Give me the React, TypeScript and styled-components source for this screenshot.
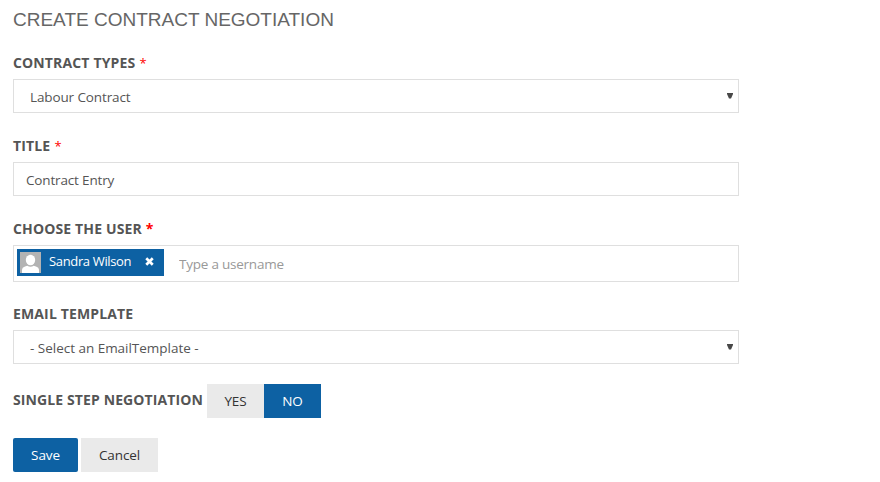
import React, { useState } from "react";
import styled, { createGlobalStyle } from "styled-components";

const Global = createGlobalStyle`
  *, *::before, *::after { box-sizing: border-box; }
  body { margin: 0; background: #fff; color: #555; font-family: "Open Sans", "Noto Sans", sans-serif; font-size: 13.5px; }
`;

const Form = styled.form`
  width: 739px;
  padding: 9px 0 10px 13px;
`;

const Heading = styled.h1`
  margin: 0 0 19px;
  height: 22px;
  font: 400 19px/22px "Liberation Sans", Arial, sans-serif;
  color: #666;
  white-space: nowrap;
`;

const Field = styled.div`
  margin-bottom: 20px;
`;

const Label = styled.label<{ $compact?: boolean }>`
  display: block;
  height: ${(p) => (p.$compact ? 28 : 29)}px;
  font-size: 14px;
  line-height: ${(p) => (p.$compact ? 24 : 26)}px;
  font-weight: 700;
  letter-spacing: 0.14px;
  white-space: nowrap;
`;

const Required = styled.span<{ $bold?: boolean }>`
  margin-left: ${(p) => (p.$bold ? 0 : 0.5)}px;
  color: #f00;
  font-size: ${(p) => (p.$bold ? 14 : 13)}px;
  font-weight: ${(p) => (p.$bold ? 700 : 400)};
`;

const SelectWrap = styled.div`
  display: flex;
  align-items: center;
  height: 34px;
  padding-right: 5px;
  border: 1px solid #dfdfdf;
`;

const Select = styled.select<{ $spacing: number }>`
  flex: 1;
  height: 32px;
  padding: 1px 0 0 16px;
  border: 0;
  outline: 0;
  appearance: none;
  background: transparent;
  color: #555;
  font: inherit;
  letter-spacing: ${(p) => p.$spacing}px;
`;

const TextInput = styled.input`
  display: block;
  width: 100%;
  height: 34px;
  padding: 1px 12px 0;
  border: 1px solid #dfdfdf;
  outline: 0;
  color: #555;
  font: inherit;
  letter-spacing: -0.16px;
`;

const UserBox = styled.div`
  display: flex;
  align-items: flex-start;
  height: 37px;
  padding: 3px;
  border: 1px solid #dfdfdf;
`;

const UserTag = styled.span`
  display: flex;
  width: 147px;
  height: 27px;
  padding: 3px;
  background: #0d61a3;
  color: #fff;
  font-size: 13px;
  line-height: 19px;
  letter-spacing: -0.35px;
  white-space: nowrap;
`;

const UserName = styled.span`
  flex: none;
  width: 104px;
  padding-left: 8px;
`;

const Remove = styled.button`
  display: flex;
  height: 20px;
  padding: 5px 0 0;
  border: 0;
  background: none;
`;

const UserInput = styled.input`
  flex: 1;
  height: 29px;
  padding: 0 0 0 15px;
  border: 0;
  outline: 0;
  font: inherit;
  letter-spacing: -0.23px;
  &::placeholder { color: #999; opacity: 1; }
`;

const ToggleRow = styled.div`
  display: flex;
  margin-bottom: 20px;
`;

const ToggleLabel = styled(Label)`
  width: 194px;
  height: 34px;
  line-height: 32px;
  letter-spacing: 0.11px;
`;

const Button = styled.button<{ $width: number; $primary?: boolean; $round?: boolean }>`
  width: ${(p) => p.$width}px;
  height: 34px;
  padding: 0 0 1px;
  border: 0;
  border-radius: ${(p) => (p.$round ? 2 : 0)}px;
  background: ${(p) => (p.$primary ? "#0d61a3" : "#eaeaea")};
  color: ${(p) => (p.$primary ? "#fff" : "#333")};
  font: inherit;
  letter-spacing: -0.1px;
`;

const Actions = styled.div`
  display: flex;
  gap: 3px;
`;

const Arrow = () => (
  <svg width="6" height="6" viewBox="0 0 6 6" fill="#484848">
    <path d="M0 0h6v1L4 5.5H2L0 1z" />
  </svg>
);

const Avatar = () => (
  <svg width="21" height="21" viewBox="0 0 21 21">
    <path fill="#b3b3b3" d="M0 0h21v21H0z" />
    <ellipse cx="10.5" cy="8" rx="4.7" ry="5.2" fill="#fff" />
    <path fill="#fff" d="M2 21v-3.2q0-2.3 3-3.2l2.3-.9q3.2 2.1 6.4 0l2.3.9q3 .9 3 3.2V21z" />
  </svg>
);

const Cross = () => (
  <svg width="9" height="9" viewBox="0 0 10 10" stroke="#fff" strokeWidth="3">
    <path d="M1.4 1.4l7.2 7.2M8.6 1.4L1.4 8.6" />
  </svg>
);

export default function App() {
  const [single, setSingle] = useState(false);
  return (
    <>
      <Global />
      <Form onSubmit={(e) => e.preventDefault()}>
        <Heading>CREATE CONTRACT NEGOTIATION</Heading>
        <Field>
          <Label htmlFor="type">CONTRACT TYPES <Required>*</Required></Label>
          <SelectWrap>
            <Select id="type" $spacing={-0.12}><option>Labour Contract</option></Select>
            <Arrow />
          </SelectWrap>
        </Field>
        <Field>
          <Label htmlFor="title">TITLE <Required>*</Required></Label>
          <TextInput id="title" defaultValue="Contract Entry" />
        </Field>
        <Field>
          <Label htmlFor="user">CHOOSE THE USER <Required $bold>*</Required></Label>
          <UserBox>
            <UserTag>
              <Avatar />
              <UserName>Sandra Wilson</UserName>
              <Remove type="button" aria-label="Remove"><Cross /></Remove>
            </UserTag>
            <UserInput id="user" placeholder="Type a username" />
          </UserBox>
        </Field>
        <Field>
          <Label htmlFor="template" $compact>EMAIL TEMPLATE</Label>
          <SelectWrap>
            <Select id="template" $spacing={-0.02}><option>- Select an EmailTemplate -</option></Select>
            <Arrow />
          </SelectWrap>
        </Field>
        <ToggleRow>
          <ToggleLabel as="span">SINGLE STEP NEGOTIATION</ToggleLabel>
          <Button type="button" $width={57} $primary={single} onClick={() => setSingle(true)}>YES</Button>
          <Button type="button" $width={57} $primary={!single} onClick={() => setSingle(false)}>NO</Button>
        </ToggleRow>
        <Actions>
          <Button type="submit" $width={65} $primary $round>Save</Button>
          <Button type="button" $width={77}>Cancel</Button>
        </Actions>
      </Form>
    </>
  );
}
